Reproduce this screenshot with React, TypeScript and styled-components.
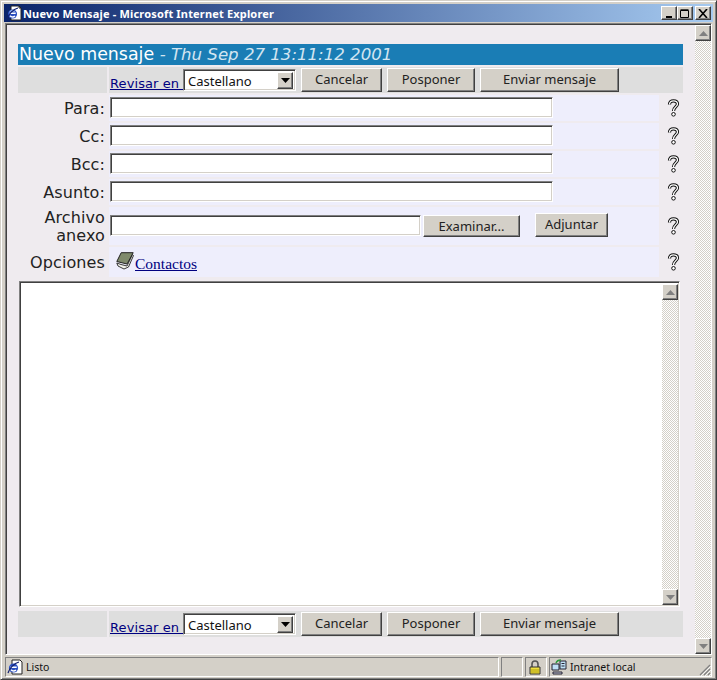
import React from "react";
import styled, { createGlobalStyle, css } from "styled-components";

const Global = createGlobalStyle`
  html, body { margin: 0; padding: 0; background: #d4d0c8; }
  #root { width: 717px; height: 680px; overflow: hidden; }
  * { box-sizing: border-box; }
`;

const raised = css`
  background: #d4d0c8;
  border: 1px solid;
  border-color: #ffffff #404040 #404040 #ffffff;
  box-shadow: inset -1px -1px 0 #808080, inset 1px 1px 0 #d4d0c8;
`;
const sunken = css`
  border: 1px solid;
  border-color: #808080 #ffffff #ffffff #808080;
  box-shadow: inset 1px 1px 0 #404040, inset -1px -1px 0 #d4d0c8;
`;

const Win = styled.div`
  width: 717px;
  height: 680px;
  display: flex;
  flex-direction: column;
  padding: 3px 4px 2px;
  background: #d4d0c8;
  border: 1px solid;
  border-color: #d4d0c8 #404040 #404040 #d4d0c8;
  box-shadow: inset 1px 1px 0 #fff, inset -1px -1px 0 #808080;
`;
const TitleBar = styled.div`
  height: 18px;
  flex: none;
  margin-left: -1px;
  margin-right: -1px;
  display: flex;
  align-items: center;
  padding: 0 2px 0 2px;
  background: linear-gradient(90deg, #0a246a 0%, #a6caf0 100%);
`;
const TitleIcon = styled.svg`
  width: 16px;
  height: 16px;
  flex: none;
`;
const TitleText = styled.span`
  margin-left: 1px;
  flex: 1;
  font: bold 11px "Noto Sans", "DejaVu Sans", sans-serif;
  color: #fff;
  white-space: nowrap;
  letter-spacing: 0.17px;
`;
const CapButton = styled.div<{ $gap?: number }>`
  ${raised}
  width: 16px;
  height: 14px;
  margin-left: ${(p) => p.$gap ?? 0}px;
  flex: none;
  display: flex;
  align-items: center;
  justify-content: center;
`;
const Viewport = styled.div`
  flex: 1;
  min-height: 0;
  margin-top: 1px;
  display: flex;
  border: 1px solid;
  border-color: #808080 #ffffff #ffffff #808080;
  box-shadow: inset 1px 1px 0 #404040;
  padding: 1px 0 0 1px;
`;
const Page = styled.div`
  flex: 1;
  min-width: 0;
  background: #efebef;
  padding: 19px 12px 0 11px;
  display: flex;
  flex-direction: column;
`;
const Banner = styled.div`
  height: 21px;
  background: #1a7db5;
  color: #fff;
  font: 17.4px/21px "DejaVu Sans", sans-serif;
  padding-left: 1px;
  white-space: nowrap;
  overflow: hidden;
`;
const Stamp = styled.i`
  font-size: 16.6px;
  color: #d2e5f1;
  font-family: "DejaVu Sans", sans-serif;
`;
const ToolRow = styled.div<{ $top: number }>`
  margin-top: ${(p) => p.$top}px;
  height: 26px;
  display: grid;
  grid-template-columns: 89px 1fr;
  column-gap: 2px;
  flex: none;
`;
const ToolBlank = styled.div`
  background: #dedede;
`;
const ToolCell = styled.div`
  background: #dedede;
  display: flex;
  align-items: center;
  padding-left: 1px;
`;
const CheckLink = styled.a`
  width: 73px;
  flex: none;
  align-self: flex-end;
  margin-bottom: 1px;
  font: 13px/16px "DejaVu Sans", sans-serif;
  color: #000080;
  text-decoration: underline;
  white-space: pre;
  overflow: hidden;
  letter-spacing: 0.1px;
`;
const Select = styled.div`
  ${sunken}
  width: 113px;
  height: 22px;
  flex: none;
  background: #fff;
  display: flex;
  align-items: center;
  justify-content: space-between;
  padding: 2px;
  font: 13px "Noto Sans", sans-serif;
  color: #111;
`;
const SelectText = styled.span`
  padding: 1px 0 0 2px;
`;
const SelectArrow = styled.div`
  ${raised}
  width: 16px;
  height: 17px;
  display: flex;
  align-items: center;
  justify-content: center;
`;
const Btn = styled.div<{ $w: number; $h?: number; $left: number; $up?: number; $pad?: number }>`
  ${raised}
  width: ${(p) => p.$w}px;
  height: ${(p) => p.$h ?? 24}px;
  margin-left: ${(p) => p.$left}px;
  margin-top: ${(p) => -(p.$up ?? 0)}px;
  flex: none;
  display: flex;
  align-items: center;
  justify-content: center;
  padding-bottom: ${(p) => p.$pad ?? 3}px;
  font: 13px "Noto Sans", sans-serif;
  color: #222;
`;
const FormGrid = styled.div`
  margin-top: 2px;
  display: grid;
  grid-template-columns: 89px 550px 1fr;
  column-gap: 2px;
  row-gap: 2px;
  flex: none;
`;
const Label = styled.div`
  font: 16px/18px "DejaVu Sans", sans-serif;
  letter-spacing: 0.1px;
  color: #222;
  text-align: right;
  padding-right: 2px;
  margin-top: 2px;
  align-self: center;
`;
const Cell = styled.div<{ $h: number; $top?: number }>`
  height: ${(p) => p.$h}px;
  background: #eeeefc;
  padding: ${(p) => p.$top ?? 2}px 0 0 1px;
  display: flex;
  align-items: flex-start;
`;
const Input = styled.div<{ $w: number }>`
  ${sunken}
  width: ${(p) => p.$w}px;
  height: 21px;
  background: #fff;
  flex: none;
`;
const HelpCell = styled.div`
  display: flex;
  align-items: center;
  padding-left: 6px;
`;
const ContactLink = styled.a`
  font: 15.5px "Liberation Serif", serif;
  color: #000080;
  text-decoration: underline;
  margin-left: 1px;
  margin-top: 5px;
`;
const BookIcon = styled.svg`
  width: 18px;
  height: 18px;
  margin-left: 6px;
  margin-top: 2px;
  flex: none;
`;
const TextArea = styled.div`
  ${sunken}
  margin: 4px 3px 0 1px;
  height: 326px;
  flex: none;
  background: #fff;
  display: flex;
  justify-content: flex-end;
  padding: 2px 1px 1px 0;
`;
const Track = styled.div<{ $w: number }>`
  width: ${(p) => p.$w}px;
  flex: none;
  display: flex;
  flex-direction: column;
  justify-content: space-between;
  background: repeating-conic-gradient(#ffffff 0 25%, #d4d0c8 0 50%) 0 0 / 2px 2px;
`;
const ScrollBtn = styled.div<{ $w: number }>`
  ${raised}
  width: ${(p) => p.$w}px;
  height: 16px;
  display: flex;
  align-items: center;
  justify-content: center;
`;
const Status = styled.div`
  height: 20px;
  flex: none;
  margin-top: 2px;
  display: flex;
  gap: 2px;
  font: 10.5px "Noto Sans", sans-serif;
  color: #111;
`;
const Pane = styled.div<{ $w?: number }>`
  ${(p) => (p.$w ? `width: ${p.$w}px; flex: none;` : "flex: 1;")}
  border: 1px solid;
  border-color: #808080 #ffffff #ffffff #808080;
  display: flex;
  align-items: center;
  gap: 3px;
  padding-left: 1px;
  min-width: 0;
  white-space: nowrap;
  position: relative;
`;
const Grip = styled.svg`
  position: absolute;
  right: 0;
  bottom: 0;
  width: 12px;
  height: 12px;
`;

const IeIcon = () => (
  <TitleIcon viewBox="0 0 16 16">
    <path d="M5 1h8l2 2v12H5z" fill="#fff" stroke="#222" strokeWidth="1" />
    <path d="M13 1v2h2" fill="none" stroke="#222" />
    <circle cx="6.5" cy="9" r="4.6" fill="#2a4fc0" />
    <path d="M3.5 8.3h6.2M4 10.8c1.4 1.6 3.6 1.5 5 .2" stroke="#fff" strokeWidth="1.4" fill="none" />
    <path d="M3.8 6.8c1-1.5 3.5-1.6 4.8-.1" stroke="#9fc0f5" strokeWidth="1.2" fill="none" />
    <path d="M1 14C2 10 7 4 12 3" stroke="#12206f" strokeWidth="1.2" fill="none" />
  </TitleIcon>
);
const Help = () => (
  <svg width="13" height="18" viewBox="0 0 13 18">
    <path d="M2.5 5.5C2.5 3 4 1.8 6.5 1.8S10.5 3 10.5 5C10.5 7.5 6.5 8 6.5 12" fill="none" stroke="#111" strokeWidth="3.2" />
    <path d="M2.5 5.5C2.5 3 4 1.8 6.5 1.8S10.5 3 10.5 5C10.5 7.5 6.5 8 6.5 12" fill="none" stroke="#fff" strokeWidth="1.3" />
    <circle cx="6.5" cy="15.3" r="1.8" fill="#fff" stroke="#111" />
  </svg>
);
const UpTri = () => (
  <svg width="9" height="5" viewBox="0 0 9 5"><path d="M4.5 0 9 5H0z" fill="#808080" /></svg>
);
const DownTri = ({ c = "#808080" }: { c?: string }) => (
  <svg width="9" height="5" viewBox="0 0 9 5"><path d="M0 0h9L4.5 5z" fill={c} /></svg>
);

const ToolBar: React.FC<{ top: number }> = ({ top }) => (
  <ToolRow $top={top}>
    <ToolBlank />
    <ToolCell>
      <CheckLink>Revisar en </CheckLink>
      <Select>
        <SelectText>Castellano</SelectText>
        <SelectArrow><DownTri c="#000" /></SelectArrow>
      </Select>
      <Btn $w={81} $left={5}>Cancelar</Btn>
      <Btn $w={88} $left={5}>Posponer</Btn>
      <Btn $w={139} $left={5}>Enviar mensaje</Btn>
    </ToolCell>
  </ToolRow>
);

export default function App() {
  const rows = ["Para:", "Cc:", "Bcc:", "Asunto:"];
  return (
    <Win>
      <Global />
      <TitleBar>
        <IeIcon />
        <TitleText>Nuevo Mensaje - Microsoft Internet Explorer</TitleText>
        <CapButton>
          <svg width="10" height="9" viewBox="0 0 10 9"><path d="M2 7h6v2H2z" fill="#000" /></svg>
        </CapButton>
        <CapButton>
          <svg width="10" height="9" viewBox="0 0 10 9"><path d="M.5 1.5h8v7h-8z M.5 .8h8" fill="none" stroke="#000" /></svg>
        </CapButton>
        <CapButton $gap={2}>
          <svg width="10" height="9" viewBox="0 0 10 9"><path d="M1 0l8 9M9 0l-8 9" stroke="#000" strokeWidth="1.6" /></svg>
        </CapButton>
      </TitleBar>
      <Viewport>
        <Page>
          <Banner>
            Nuevo mensaje <Stamp>- Thu Sep 27 13:11:12 2001</Stamp>
          </Banner>
          <ToolBar top={2} />
          <FormGrid>
            {rows.map((r) => (
              <React.Fragment key={r}>
                <Label>{r}</Label>
                <Cell $h={26}><Input $w={443} /></Cell>
                <HelpCell><Help /></HelpCell>
              </React.Fragment>
            ))}
            <Label>Archivo<br />anexo</Label>
            <Cell $h={38} $top={8}>
              <Input $w={311} />
              <Btn $w={97} $h={22} $left={2} $pad={0}>Examinar...</Btn>
              <Btn $w={73} $h={24} $left={15} $up={2}>Adjuntar</Btn>
            </Cell>
            <HelpCell><Help /></HelpCell>
            <Label>Opciones</Label>
            <Cell $h={30} $top={3}>
              <BookIcon viewBox="0 0 18 18">
                <path d="M.8 11 2 14l6 3 4.5-2 5-11.5-1-1L11 14 5 12.5z" fill="#f2f2ea" stroke="#222" strokeWidth=".9" strokeLinejoin="round" />
                <path d="M.8 9.5 5.2 .7h12L11 12z" fill="#7f8a6c" stroke="#222" strokeWidth="1" strokeLinejoin="round" />
              </BookIcon>
              <ContactLink>Contactos</ContactLink>
            </Cell>
            <HelpCell><Help /></HelpCell>
          </FormGrid>
          <TextArea>
            <Track $w={16}>
              <ScrollBtn $w={16}><UpTri /></ScrollBtn>
              <ScrollBtn $w={16}><DownTri /></ScrollBtn>
            </Track>
          </TextArea>
          <ToolBar top={4} />
        </Page>
        <Track $w={16}>
          <ScrollBtn $w={16}><UpTri /></ScrollBtn>
          <ScrollBtn $w={16}><DownTri /></ScrollBtn>
        </Track>
      </Viewport>
      <Status>
        <Pane>
          <TitleIcon viewBox="0 0 16 16">
            <path d="M5 1h8l2 2v12H5z" fill="#fff" stroke="#222" />
            <circle cx="6.5" cy="9" r="4.6" fill="#2a4fc0" />
            <path d="M3.5 8.3h6.2M4 10.8c1.4 1.6 3.6 1.5 5 .2" stroke="#fff" strokeWidth="1.4" fill="none" />
            <path d="M1 14C2 10 7 4 12 3" stroke="#12206f" strokeWidth="1.2" fill="none" />
          </TitleIcon>
          Listo
        </Pane>
        <Pane $w={22} />
        <Pane $w={22}>
          <TitleIcon viewBox="0 0 16 16">
            <path d="M5 8V5a3 3 0 0 1 6 0v3" fill="none" stroke="#555" strokeWidth="1.6" />
            <path d="M3 8h10v7H3z" fill="#f0e040" stroke="#333" />
            <path d="M4 11h8M4 13h8" stroke="#b0a010" />
          </TitleIcon>
        </Pane>
        <Pane $w={163}>
          <TitleIcon viewBox="0 0 16 16">
            <path d="M1 5h7v6H1z" fill="#bfe0f5" stroke="#223" />
            <path d="M9 2h6v8H9z" fill="#bfe0f5" stroke="#223" />
            <path d="M2 13h9v2H2z" fill="#c8c8d8" stroke="#223" />
            <path d="M5 4c1-3 3-3 5-3" stroke="#2a9a3a" strokeWidth="1.4" fill="none" />
            <path d="M10.5 4.5h3M10.5 7h3" stroke="#223" />
          </TitleIcon>
          Intranet local
          <Grip viewBox="0 0 12 12">
            <path d="M11 1 1 11M11 5l-6 6M11 9l-2 2" stroke="#808080" strokeWidth="1.2" />
            <path d="M12 2 2 12M12 6l-6 6M12 10l-2 2" stroke="#fff" strokeWidth="0.8" />
          </Grip>
        </Pane>
      </Status>
    </Win>
  );
}
